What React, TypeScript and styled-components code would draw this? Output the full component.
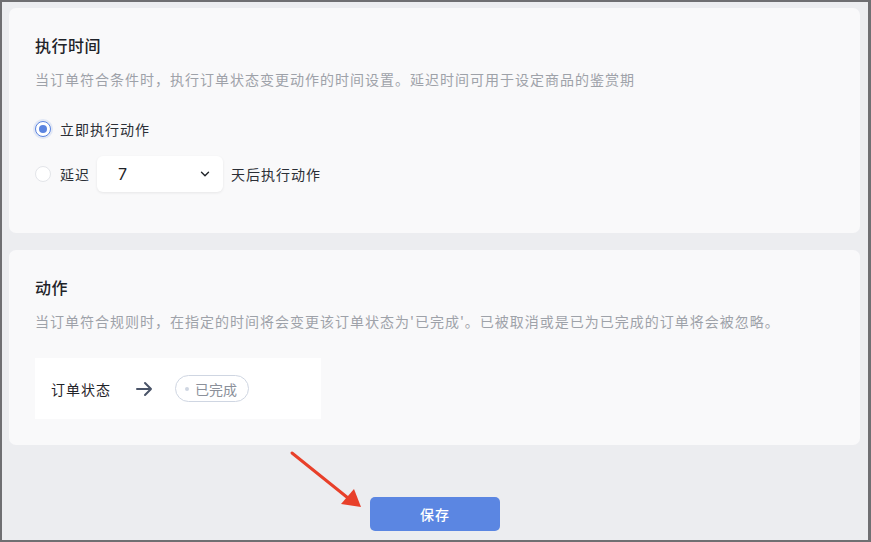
import React from "react";
import styled, { createGlobalStyle } from "styled-components";

const Global = createGlobalStyle`
  html, body { margin: 0; padding: 0; background: #ecedf0; }
  body { font-family: "Noto Sans CJK SC", "Noto Sans", sans-serif; }
  * { box-sizing: border-box; }
`;

const Frame = styled.div`
  position: relative;
  width: 871px;
  height: 542px;
  background: #ecedf0;
  border-style: solid;
  border-color: #6f6f72;
  border-width: 2px 3px 2px 2px;
  padding: 6px 8px 0 7px;
  display: flex;
  flex-direction: column;
  gap: 17px;
  overflow: hidden;
`;

const Card = styled.section<{ $h: number }>`
  height: ${(p) => p.$h}px;
  background: #f9f9fa;
  border-radius: 7px;
  padding: 25px 26px 0 26px;
  display: flex;
  flex-direction: column;
`;

const Title = styled.h2`
  margin: 0;
  font-size: 16px;
  line-height: 24px;
  font-weight: 500;
  letter-spacing: 0.5px;
  color: #1f2329;
`;

const Desc = styled.p`
  margin: 11px 0 0;
  font-size: 14px;
  line-height: 22px;
  letter-spacing: 1px;
  color: #9ea2a9;
  white-space: nowrap;
`;

const Options = styled.div`
  margin-top: 21px;
  display: flex;
  flex-direction: column;
  gap: 9px;
`;

const OptionRow = styled.label`
  display: flex;
  align-items: center;
  height: 36px;
  font-size: 14px;
  letter-spacing: 1px;
  color: #2b2f36;
`;

const Radio = styled.span<{ $on?: boolean }>`
  width: 16px;
  height: 16px;
  border-radius: 50%;
  flex: none;
  margin-right: 9px;
  background: #fff;
  border: 1px solid ${(p) => (p.$on ? "#5b84e0" : "#e3e5e9")};
  box-shadow: ${(p) => (p.$on ? "0 0 0 2px rgba(91,132,224,0.15)" : "none")};
  display: flex;
  align-items: center;
  justify-content: center;
  &::after {
    content: "";
    display: ${(p) => (p.$on ? "block" : "none")};
    width: 8px;
    height: 8px;
    border-radius: 50%;
    background: #5b84e0;
  }
`;

const Select = styled.div`
  margin: 0 8px 0 7px;
  width: 126px;
  height: 36px;
  background: #fff;
  border-radius: 6px;
  box-shadow: 0 1px 3px rgba(0, 0, 0, 0.08);
  display: flex;
  align-items: center;
  justify-content: space-between;
  padding: 0 11px 0 21px;
  font-family: "Inter", "Noto Sans", sans-serif;
  font-size: 16px;
  font-weight: 400;
  color: #1f2329;
`;

const StatusBox = styled.div`
  margin-top: 26px;
  width: 286px;
  height: 61px;
  background: #fff;
  display: flex;
  align-items: center;
  padding-left: 16px;
  font-size: 14px;
  letter-spacing: 1px;
  color: #1f2329;
`;

const ArrowWrap = styled.span`
  display: flex;
  margin: 0 22px 0 24px;
  color: #4a5468;
`;

const Pill = styled.span`
  height: 27px;
  padding: 0 11px 0 9px;
  border: 1px solid #cfd6e2;
  border-radius: 14px;
  display: inline-flex;
  align-items: center;
  gap: 6px;
  font-size: 14px;
  letter-spacing: 0;
  color: #8b909a;
  &::before {
    content: "";
    width: 4px;
    height: 4px;
    border-radius: 50%;
    background: #cfd6e2;
  }
`;

const Footer = styled.div`
  display: flex;
  justify-content: center;
  padding-top: 35px;
  padding-left: 1px;
`;

const SaveButton = styled.button`
  width: 130px;
  height: 34px;
  border: none;
  border-radius: 5px;
  background: #5b86e2;
  color: #fff;
  font-family: "Noto Sans CJK SC", sans-serif;
  font-size: 14px;
  font-weight: 500;
  letter-spacing: 1px;
`;

const Annotation = styled.svg`
  position: absolute;
  left: 0;
  top: 0;
  pointer-events: none;
`;

export default function App() {
  return (
    <>
      <Global />
      <Frame>
        <Card $h={225}>
          <Title>执行时间</Title>
          <Desc>当订单符合条件时，执行订单状态变更动作的时间设置。延迟时间可用于设定商品的鉴赏期</Desc>
          <Options>
            <OptionRow>
              <Radio $on />
              立即执行动作
            </OptionRow>
            <OptionRow>
              <Radio />
              延迟
              <Select>
                <span>7</span>
                <svg width="14" height="14" viewBox="0 0 24 24" fill="none" stroke="#1f2329" strokeWidth="2.4" strokeLinecap="round" strokeLinejoin="round">
                  <path d="M6 9l6 6 6-6" />
                </svg>
              </Select>
              天后执行动作
            </OptionRow>
          </Options>
        </Card>
        <Card $h={195}>
          <Title>动作</Title>
          <Desc>当订单符合规则时，在指定的时间将会变更该订单状态为'已完成'。已被取消或是已为已完成的订单将会被忽略。</Desc>
          <StatusBox>
            订单状态
            <ArrowWrap>
              <svg width="18" height="16" viewBox="0 0 18 16" fill="none" stroke="currentColor" strokeWidth="2" strokeLinecap="round" strokeLinejoin="round">
                <path d="M2 8h14M10 2l6 6-6 6" />
              </svg>
            </ArrowWrap>
            <Pill>已完成</Pill>
          </StatusBox>
        </Card>
        <Footer>
          <SaveButton>保存</SaveButton>
        </Footer>
        <Annotation width="871" height="542" viewBox="0 0 871 542">
          <line x1="290" y1="451" x2="346" y2="496" stroke="#e8402a" strokeWidth="3" strokeLinecap="round" />
          <polygon points="359,505 339,502 352,487" fill="#e8402a" />
        </Annotation>
      </Frame>
    </>
  );
}
